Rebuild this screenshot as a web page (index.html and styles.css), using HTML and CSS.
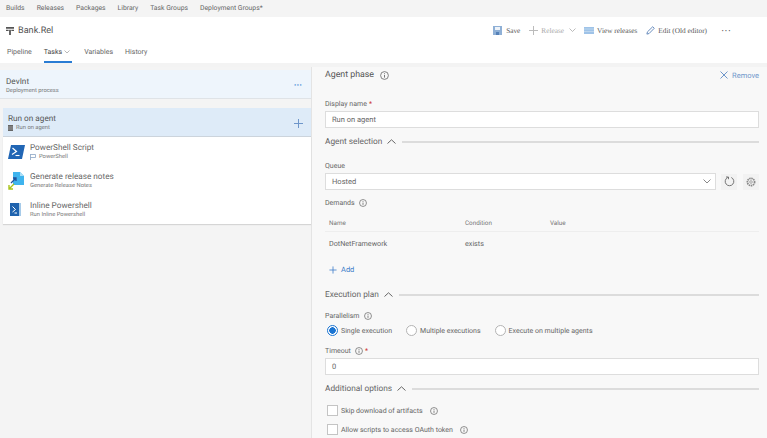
FILE: index.html
```html
<!DOCTYPE html>
<html lang="en">
<head>
<meta charset="utf-8">
<title>Bank.Rel</title>
<link rel="stylesheet" href="styles.css">
</head>
<body>
<nav class="topnav">
  <span>Builds</span><span>Releases</span><span>Packages</span><span>Library</span><span>Task Groups</span><span>Deployment Groups*</span>
</nav>
<header class="titlebar">
  <div class="title">
    <svg class="logo" width="8" height="8" viewBox="0 0 9 9"><path d="M0 0h9v2H0zM0 3h3v1.500H0zM6 3h3v1.500H6zM3.500 3h2v6h-2z" fill="#555"/></svg>
    <span>Bank.Rel</span>
  </div>
  <div class="tools">
    <span class="tool tool-save"><svg width="9" height="9" viewBox="0 0 9 9"><path d="M0 0h9v9H0z" fill="#8fb0d6"/><path d="M2 1h5v3H2z" fill="#eef3f9"/><path d="M3 6h3v3H3z" fill="#5581b8"/></svg>Save</span>
    <span class="tool tool-release is-disabled"><svg width="9" height="9" viewBox="0 0 9 9"><path d="M4.500 0v9M0 4.500h9" stroke="#bbb" fill="none"/></svg>Release<svg class="chev" width="7" height="4" viewBox="0 0 7 4"><path d="M.5.500 3.500 3.500 6.500.500" stroke="#aaa" fill="none" stroke-width=".8"/></svg></span>
    <span class="tool tool-view"><svg width="10" height="7" viewBox="0 0 10 7"><path d="M0 0h10v7H0z" fill="#9fc3e8"/><path d="M0 2h10M0 4.500h10" stroke="#dbe8f5" stroke-width=".5"/></svg>View releases</span>
    <span class="tool tool-edit"><svg width="9" height="9" viewBox="0 0 10 10"><path d="M1 9l.6-2.500L7.500.8l1.700 1.700L3.400 8.400z" fill="none" stroke="#5b82b8"/></svg>Edit (Old editor)</span>
    <span class="tool-more">···</span>
  </div>
</header>
<div class="tabs">
  <span class="tab">Pipeline</span>
  <span class="tab tab-active">Tasks<svg width="6" height="4" viewBox="0 0 6 4"><path d="M.5.500 3 3 5.500.500" stroke="#999" fill="none" stroke-width=".7"/></svg></span>
  <span class="tab">Variables</span>
  <span class="tab">History</span>
</div>
<main class="main">
  <section class="left">
    <div class="stage">
      <div>
        <div class="stage-name">DevInt</div>
        <div class="sub">Deployment process</div>
      </div>
      <span class="stage-more">···</span>
    </div>
    <div class="phase">
      <div>
        <div class="phase-name">Run on agent</div>
        <div class="sub sub-icon"><svg width="5" height="6" viewBox="0 0 5 6"><path d="M0 0h5v6H0z" fill="#666"/><path d="M0 2h5M0 4h5" stroke="#ccc" stroke-width=".5"/></svg>Run on agent</div>
      </div>
      <svg class="plus" width="9" height="9" viewBox="0 0 9 9"><path d="M4.500 0v9M0 4.500h9" stroke="#6e96ca" fill="none"/></svg>
    </div>
    <div class="tasks">
      <div class="task">
        <svg class="task-icon" width="17" height="14" viewBox="0 0 17 14"><path d="M3 0h14l-3 14H0z" fill="#2166b5"/><path d="M4.500 3 8.500 6.500 4 9.500" stroke="#fff" fill="none" stroke-width="1.200"/><path d="M7.500 10.500h4" stroke="#fff" stroke-width="1.100"/></svg>
        <div><div class="task-name">PowerShell Script</div><div class="sub sub-icon"><svg width="6" height="6" viewBox="0 0 6 6"><path d="M.5 0v6M.500.500h5v3h-5" stroke="#8aa4c4" fill="none" stroke-width=".8"/></svg>PowerShell</div></div>
      </div>
      <div class="task">
        <svg class="task-icon" width="17" height="18" viewBox="0 0 17 18"><path d="M5 0h7l4 4v9H5z" fill="#3fb4ee"/><path d="M12 0l4 4h-4z" fill="#a9ddf6"/><path d="M3 11 8 6M5 6h3v3" stroke="#1f4f9c" fill="none" stroke-width="1.300"/><path d="M1 17 6 12M1 13v4h4" stroke="#a9c31b" fill="none" stroke-width="1.400"/></svg>
        <div><div class="task-name">Generate release notes</div><div class="sub">Generate Release Notes</div></div>
      </div>
      <div class="task">
        <svg class="task-icon" width="17" height="13" viewBox="0 0 17 13"><path d="M2 0h11v13H2z" fill="#a7cbe9"/><path d="M2 0h9v13H2z" fill="#1f63ae"/><path d="M4.500 3.500 7.500 6.500 4.500 9" stroke="#fff" fill="none"/><path d="M6.500 10h2.500" stroke="#fff"/></svg>
        <div><div class="task-name">Inline Powershell</div><div class="sub">Run Inline Powershell</div></div>
      </div>
    </div>
  </section>
  <section class="right">
    <div class="panel-head">
      <div class="panel-title">Agent phase<svg class="info info-lg" viewBox="0 0 9 9"><circle cx="4.500" cy="4.500" r="3.900" fill="none" stroke="#666" stroke-width=".8"/><path d="M4.500 4v2.600M4.500 2.300v.9" stroke="#666" stroke-width=".9"/></svg></div>
      <div class="remove"><svg width="8" height="8" viewBox="0 0 8 8"><path d="M.5.500l7 7M7.500.500l-7 7" stroke="#5e8ac4" fill="none" stroke-width=".9"/></svg>Remove</div>
    </div>
    <label class="label label-name">Display name <b class="req">*</b></label>
    <div class="input">Run on agent</div>
    <div class="section section-agent"><span>Agent selection</span><svg class="caret" width="9" height="5" viewBox="0 0 9 5"><path d="M.5 4.500 4.500.8 8.500 4.500" stroke="#666" fill="none"/></svg><i class="rule"></i></div>
    <label class="label label-queue">Queue</label>
    <div class="queue-row">
      <div class="input input-select">Hosted<svg width="8" height="5" viewBox="0 0 8 5"><path d="M.5.500 4 4 7.500.500" stroke="#888" fill="none"/></svg></div>
      <span class="icon-btn icon-refresh"><svg width="11" height="11" viewBox="0 0 11 11"><path d="M3.700 1.500a4.300 4.300 0 1 0 3.600 0" fill="none" stroke="#666" stroke-width=".9"/><path d="M2 1h2.500v2.200" fill="none" stroke="#555" stroke-width=".8"/></svg></span>
      <span class="icon-btn icon-gear"><svg width="10" height="10" viewBox="0 0 10 10"><circle cx="5" cy="5" r="3.600" fill="none" stroke="#888" stroke-width="1.700" stroke-dasharray="1.500 .6"/><circle cx="5" cy="5" r="1.300" fill="none" stroke="#888" stroke-width=".7"/></svg></span>
    </div>
    <div class="label label-demands">Demands<svg class="info" viewBox="0 0 9 9"><circle cx="4.500" cy="4.500" r="3.900" fill="none" stroke="#666" stroke-width=".8"/><path d="M4.500 4v2.600M4.500 2.300v.9" stroke="#666" stroke-width=".9"/></svg></div>
    <div class="dtable dhead"><span>Name</span><span>Condition</span><span>Value</span></div>
    <div class="dtable drow"><span>DotNetFramework</span><span>exists</span><span></span></div>
    <div class="add"><svg width="8" height="8" viewBox="0 0 9 9"><path d="M4.500.500v8M.500 4.500h8" stroke="#3d7cc9" fill="none" stroke-width=".9"/></svg>Add</div>
    <div class="section section-exec"><span>Execution plan</span><svg class="caret" width="9" height="5" viewBox="0 0 9 5"><path d="M.5 4.500 4.500.8 8.500 4.500" stroke="#666" fill="none"/></svg><i class="rule"></i></div>
    <div class="label label-par">Parallelism<svg class="info" viewBox="0 0 9 9"><circle cx="4.500" cy="4.500" r="3.900" fill="none" stroke="#666" stroke-width=".8"/><path d="M4.500 4v2.600M4.500 2.300v.9" stroke="#666" stroke-width=".9"/></svg></div>
    <div class="radios">
      <span class="radio-item"><i class="radio radio-on"></i>Single execution</span>
      <span class="radio-item"><i class="radio"></i>Multiple executions</span>
      <span class="radio-item"><i class="radio"></i>Execute on multiple agents</span>
    </div>
    <div class="label label-timeout">Timeout<svg class="info" viewBox="0 0 9 9"><circle cx="4.500" cy="4.500" r="3.900" fill="none" stroke="#666" stroke-width=".8"/><path d="M4.500 4v2.600M4.500 2.300v.9" stroke="#666" stroke-width=".9"/></svg><b class="req">*</b></div>
    <div class="input">0</div>
    <div class="section section-add"><span>Additional options</span><svg class="caret" width="9" height="5" viewBox="0 0 9 5"><path d="M.5 4.500 4.500.8 8.500 4.500" stroke="#666" fill="none"/></svg><i class="rule"></i></div>
    <div class="check-row check-first"><i class="check"></i>Skip download of artifacts<svg class="info" viewBox="0 0 9 9"><circle cx="4.500" cy="4.500" r="3.900" fill="none" stroke="#666" stroke-width=".8"/><path d="M4.500 4v2.600M4.500 2.300v.9" stroke="#666" stroke-width=".9"/></svg></div>
    <div class="check-row"><i class="check"></i>Allow scripts to access OAuth token<svg class="info" viewBox="0 0 9 9"><circle cx="4.500" cy="4.500" r="3.900" fill="none" stroke="#666" stroke-width=".8"/><path d="M4.500 4v2.600M4.500 2.300v.9" stroke="#666" stroke-width=".9"/></svg></div>
  </section>
</main>
</body>
</html>
```
FILE: styles.css
```css
* { box-sizing: border-box; }
html, body { margin: 0; height: 438px; overflow: hidden; }
body { font-family: Roboto, "Liberation Sans", sans-serif; font-size: 7px; color: #666; background: #fff; display: flex; flex-direction: column; text-rendering: geometricPrecision; }
svg { flex: none; }
i { display: block; }

.topnav { flex: none; height: 17px; background: #f4f4f4; display: flex; align-items: center; gap: 12px; padding: 0 0 2px 6px; font-size: 6.800px; }
.titlebar { flex: none; height: 26px; display: flex; align-items: center; justify-content: space-between; padding: 0 36px 0 6px; }
.title { display: flex; align-items: center; gap: 4px; font-size: 9.100px; color: #555; padding-top: 2px; }
.tools { display: flex; align-items: center; font-family: "Liberation Serif", serif; font-size: 7.300px; color: #555; }
.tool { display: flex; align-items: center; gap: 3px; }
.tool-save { gap: 4px; margin-right: 9px; }
.tool-release { margin-right: 8px; }
.tool-view { margin-right: 9px; }
.tool-edit { margin-right: 14px; }
.is-disabled { color: #aaa; }
.chev { margin-left: 2px; }
.tool-more { font-size: 10px; line-height: 10px; padding-top: 3px; color: #555; }

.tabs { flex: none; height: 20px; display: flex; gap: 12px; padding-left: 7px; align-items: stretch; }
.tab { display: flex; align-items: center; gap: 2px; border-bottom: 2px solid transparent; }
.tab-active { border-bottom-color: #2a7cd3; color: #444; padding-right: 2px; }

.main { flex: 1; min-height: 0; display: flex; border-top: 4px solid #f3f3f3; background: #f8f8f8; }
.left { width: 312px; flex: none; background: #f4f4f4; border-right: 1px solid #e4e4e4; padding: 3px 0 0 3px; }
.right { flex: 1; min-width: 0; padding: 0 8px 0 13px; }

.stage { height: 29px; background: #eef5fc; border-bottom: 1px solid #dfe3e7; margin-left: -3px; padding: 4px 9px 0 6px; display: flex; align-items: center; justify-content: space-between; }
.stage-name { font-size: 8.200px; line-height: 10px; color: #555; }
.sub { font-size: 5.800px; line-height: 8px; color: #777; }
.sub-icon { display: flex; align-items: center; gap: 3px; }
.stage-more { color: #2a7cd3; font-size: 9px; font-weight: 700; line-height: 8px; }
.phase { height: 29px; margin-top: 9px; background: #deebf8; border-bottom: 1px solid #ccd4dc; padding: 2px 8px 0 5px; display: flex; align-items: center; justify-content: space-between; }
.phase-name { font-size: 8.200px; line-height: 10px; color: #555; }
.tasks { background: #fff; box-shadow: 0 1px 1px #d5d5d5; }
.task { height: 29px; display: flex; align-items: center; padding-left: 5px; gap: 5px; }
.task-icon { width: 17px; }
.task-name { font-size: 8.200px; line-height: 10px; color: #666; }

.panel-head { height: 16px; display: flex; align-items: center; justify-content: space-between; }
.panel-title { font-size: 8.800px; color: #555; display: flex; align-items: center; gap: 6px; }
.remove { display: flex; align-items: center; gap: 4px; color: #6e96ca; font-size: 7.500px; }
.info { width: 8px; height: 8px; margin-left: 2px; }
.info-lg { margin-left: 0; width: 9px; height: 9px; }
.label { display: flex; align-items: center; height: 11px; gap: 2px; }
.label-name { margin-top: 15px; }
.label-queue { margin-top: 13px; }
.label-demands { margin-top: 7px; }
.label-par { margin-top: 10px; }
.label-timeout { margin-top: 9px; }
.req { color: #c33; font-weight: 400; }
.input { height: 17px; background: #fff; border: 1px solid #ddd; margin-top: 2px; padding-left: 6px; display: flex; align-items: center; font-size: 7.500px; }
.section { display: flex; align-items: center; height: 11px; font-size: 8.300px; color: #666; gap: 5px; }
.section-agent { margin-top: 8px; }
.section-exec { margin-top: 14px; }
.section-add { margin-top: 8px; }
.caret { margin-right: 1px; }
.rule { flex: 1; height: 2px; background: #dcdcdc; }
.queue-row { display: flex; align-items: center; }
.input-select { flex: 1; justify-content: space-between; padding-right: 4px; }
.icon-btn { width: 16px; height: 16px; margin-top: 2px; display: flex; align-items: center; justify-content: center; background: #f2f2f2; }
.icon-refresh { margin-left: 5px; }
.icon-gear { margin-left: 6px; }
.dtable { display: grid; grid-template-columns: 136px 85px 1fr; padding-left: 4px; }
.dhead { height: 16px; margin-top: 8px; align-items: center; font-size: 6.300px; color: #777; border-bottom: 1px solid #eee; padding-bottom: 1px; }
.drow { height: 22px; align-items: center; font-size: 7.200px; }
.add { display: flex; align-items: center; gap: 4px; margin-top: 10px; padding-left: 4px; height: 11px; color: #3d7cc9; font-size: 7.500px; }
.radios { display: flex; gap: 14px; margin-top: 4px; padding-left: 2px; height: 11px; align-items: center; }
.radio-item { display: flex; align-items: center; gap: 3px; }
.radio { width: 11px; height: 11px; border-radius: 50%; border: 1px solid #b4b4b4; background: #fff; }
.radio-on { border-color: #1a74d2; background: radial-gradient(circle, #1a74d2 0 3px, #fff 3.500px); }
.check-row { display: flex; align-items: center; height: 11px; margin-top: 8px; padding-left: 2px; gap: 3px; }
.check-first { margin-top: 11px; }
.check-row .info { margin-left: 4px; }
.check { width: 11px; height: 11px; border: 1px solid #c4c4c4; background: #fff; }
```
